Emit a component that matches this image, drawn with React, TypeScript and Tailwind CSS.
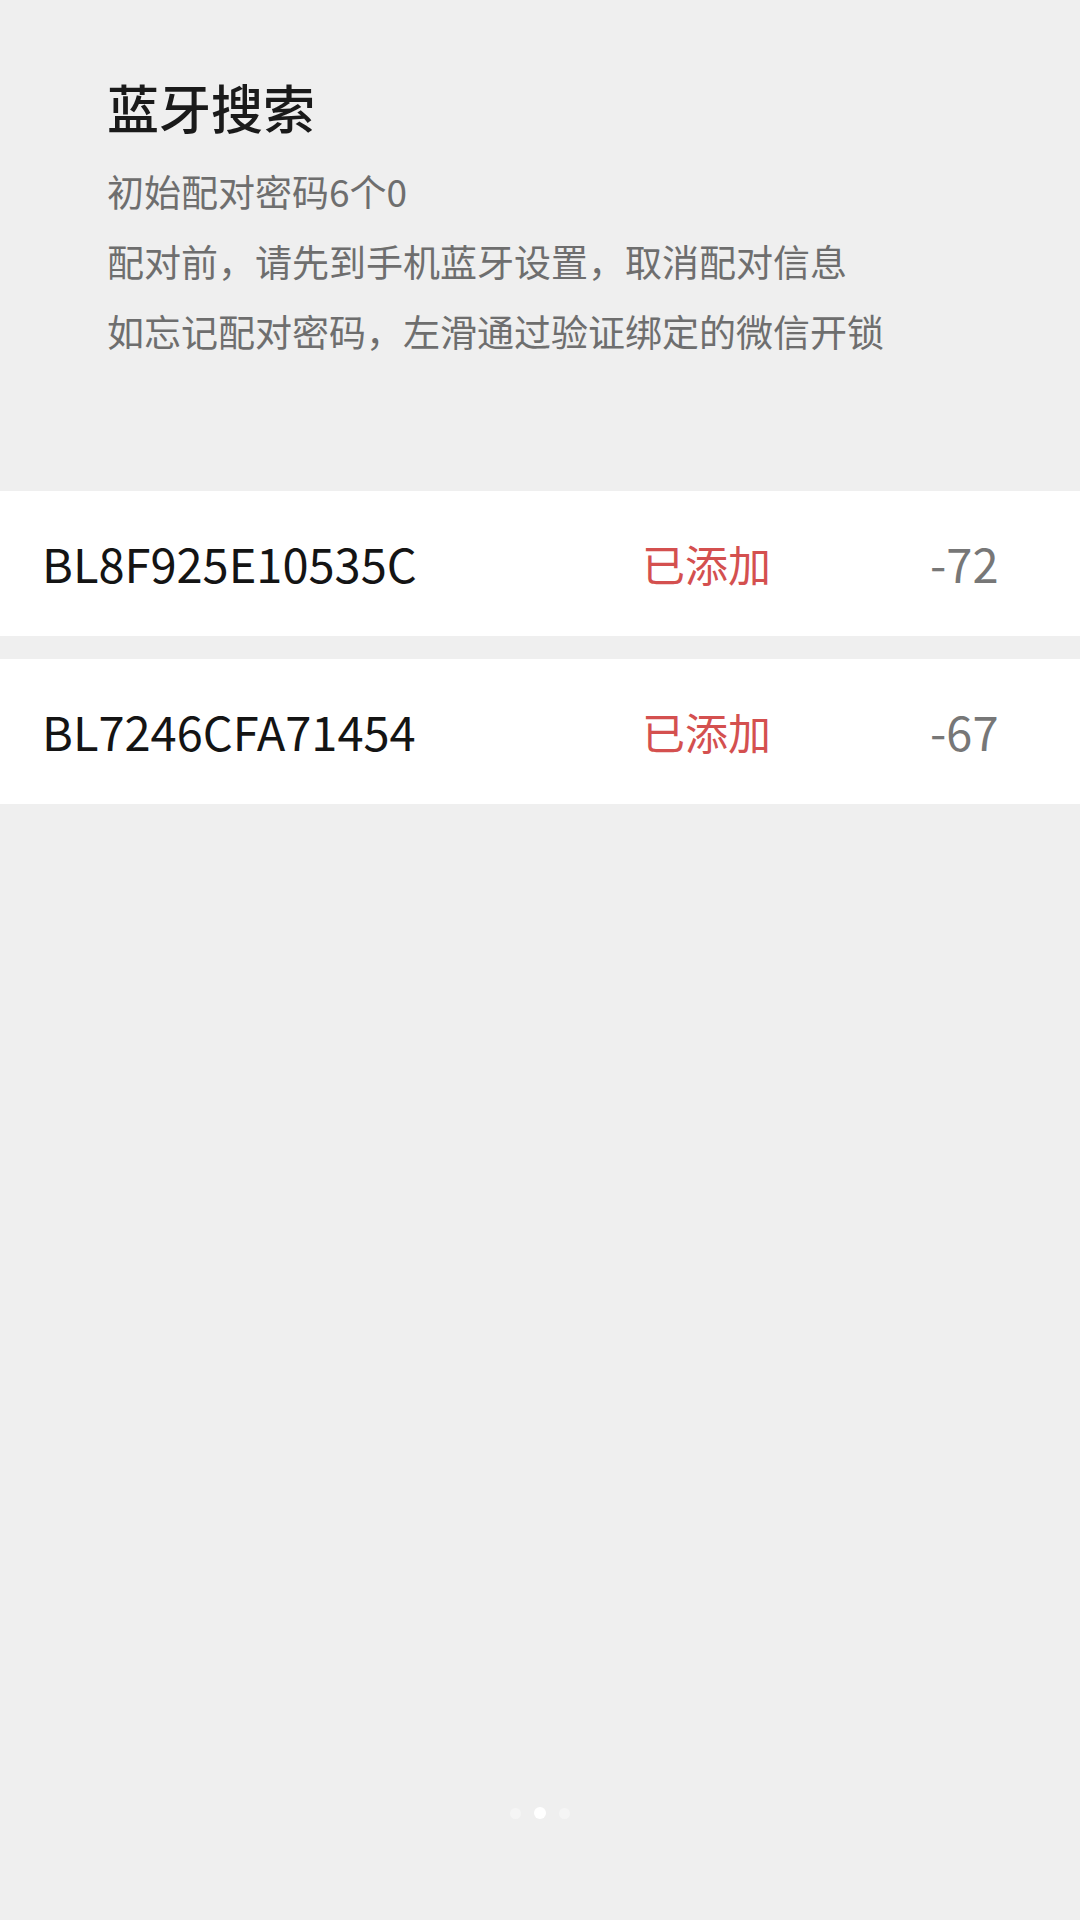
const DEVICES = [
  { id: "BL8F925E10535C", status: "已添加", rssi: "-72" },
  { id: "BL7246CFA71454", status: "已添加", rssi: "-67" },
];

const TIPS = [
  "初始配对密码6个0",
  "配对前，请先到手机蓝牙设置，取消配对信息",
  "如忘记配对密码，左滑通过验证绑定的微信开锁",
];

export default function App() {
  return (
    <div className="min-h-[1920px] w-[1080px] flex flex-col bg-[#efefef] font-['Noto_Sans_CJK_SC','Noto_Sans',sans-serif]">
      {/* Header */}
      <div className="pl-[107px] pt-[77px]">
        <h1 className="text-[52px] leading-[60px] text-[#1a1a1a] font-medium">
          蓝牙搜索
        </h1>
        <div className="mt-[19px]">
          {TIPS.map((t) => (
            <p key={t} className="text-[37px] leading-[70px] text-[#6e6e6e]">
              {t}
            </p>
          ))}
        </div>
      </div>

      {/* Device list */}
      <div className="mt-[125px] flex flex-col gap-[23px]">
        {DEVICES.map((d) => (
          <div
            key={d.id}
            className="h-[145px] bg-white grid grid-cols-[600px_288px_1fr] items-center pl-[42px]"
          >
            <span className="text-[47px] text-[#141414]">{d.id}</span>
            <span className="text-[43px] text-[#d4504f]">{d.status}</span>
            <span className="text-[47px] text-[#777777]">{d.rssi}</span>
          </div>
        ))}
      </div>

      <div className="flex-1" />

      {/* Page dots */}
      <div className="flex justify-center items-center gap-[13px] pb-[101px]">
        <span className="w-[11px] h-[11px] rounded-full bg-[#f5f5f5]" />
        <span className="w-[12px] h-[12px] rounded-full bg-white" />
        <span className="w-[11px] h-[11px] rounded-full bg-[#f5f5f5]" />
      </div>
    </div>
  );
}
